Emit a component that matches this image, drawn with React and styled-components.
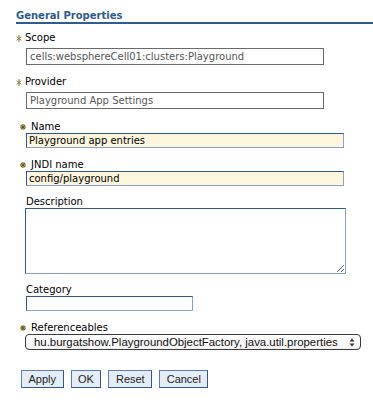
import React from "react";
import styled, { createGlobalStyle } from "styled-components";

const Global = createGlobalStyle`
  html, body { margin: 0; padding: 0; background: #fff; }
  body { font-family: "DejaVu Sans", Verdana, sans-serif; font-size: 10px; color: #000; }
`;

const Page = styled.div`
  padding: 9.5px 0 0 16px;
  width: 373px;
  box-sizing: border-box;
`;

const Title = styled.h2`
  margin: 0;
  font-size: 10px;
  line-height: 12px;
  font-weight: bold;
  color: #2c5a8f;
  padding-bottom: 0px;
  border-bottom: 2px solid #2f5b8f;
`;

const Form = styled.form`
  display: flex;
  flex-direction: column;
`;

const Field = styled.div`
  display: flex;
  flex-direction: column;
  align-items: flex-start;
  margin-top: ${(p) => p.$top ?? 11.5}px;
`;

const Label = styled.label`
  display: flex;
  align-items: center;
  height: 12px;
  line-height: 12px;
  padding-left: ${(p) => p.$indent}px;
  gap: ${(p) => p.$gap ?? 0}px;
  margin-bottom: ${(p) => p.$below ?? 0}px;
`;

const Marker = styled.span`
  display: inline-flex;
  width: ${(p) => p.$w}px;
  justify-content: ${(p) => (p.$w > 6 ? "flex-start" : "center")};
  svg { display: block; }
`;

const ReadOnlyInput = styled.input`
  box-sizing: border-box;
  margin: 0 0 0 10px;
  width: 298px;
  height: 17px;
  border: 1px solid #6a6a6a;
  padding: 0 3px;
  font: inherit;
  font-size: 10px;
  color: #555;
  background: #fff;
  outline: none;
`;

const TextInput = styled.input`
  box-sizing: border-box;
  margin: 0 0 0 10px;
  width: ${(p) => p.$w}px;
  height: 15px;
  border: 1px solid;
  border-color: #2a5a94 #85a3c9 #85a3c9 #2a5a94;
  padding: 0 2px;
  font: inherit;
  font-size: 10px;
  color: #000;
  background: ${(p) => (p.$req ? "#fdf5dc" : "#fff")};
  outline: none;
`;

const TextArea = styled.textarea`
  box-sizing: border-box;
  margin: 0 0 0 9px;
  width: 321px;
  height: 66px;
  border: 1px solid;
  border-color: #2a5a94 #85a3c9 #85a3c9 #2a5a94;
  padding: 2px;
  font: inherit;
  font-size: 10px;
  background: #fff;
  outline: none;
  display: block;
`;

const SelectWrap = styled.div`
  position: relative;
  margin-left: 9px;
  width: 336px;
  height: 16px;
`;

const Select = styled.select`
  appearance: none;
  -webkit-appearance: none;
  box-sizing: border-box;
  width: 100%;
  height: 16px;
  margin: 0;
  padding: 0 0 0 8px;
  border: 1px solid #3a3a3a;
  border-radius: 4px;
  background: linear-gradient(#ffffff, #f2f2f2);
  font-family: "Liberation Sans", Arial, sans-serif;
  font-size: 11.4px;
  line-height: 14px;
  color: #111;
  outline: none;
`;

const Arrows = styled.span`
  position: absolute;
  right: 6px;
  top: 4px;
  pointer-events: none;
  svg { display: block; }
`;

const Buttons = styled.div`
  display: flex;
  gap: 7px;
  margin: 20px 0 0 5px;
`;

const Button = styled.button`
  box-sizing: border-box;
  height: 18px;
  padding: 0 6.5px;
  margin: 0;
  border: 1px solid;
  border-color: #5a80b2 #2c5a8f #2c5a8f #5a80b2;
  background: #e4ecf8;
  font-family: "Liberation Sans", Arial, sans-serif;
  font-size: 11px;
  color: #222;
  line-height: 16px;
`;

const SmallStar = () => (
  <svg width="6" height="7" viewBox="0 0 6 7">
    <g stroke="#8a7a35" strokeWidth="1" strokeLinecap="square">
      <line x1="3" y1="0.5" x2="3" y2="6.5" />
      <line x1="1" y1="2" x2="5" y2="5" />
      <line x1="1" y1="5" x2="5" y2="2" />
    </g>
  </svg>
);

const ReqStar = () => (
  <svg width="6" height="6" viewBox="0 0 6 6">
    <g stroke="#6b5a12" strokeWidth="1.1">
      <line x1="3" y1="0" x2="3" y2="6" />
      <line x1="0" y1="3" x2="6" y2="3" />
      <line x1="0.9" y1="0.9" x2="5.1" y2="5.1" />
      <line x1="0.9" y1="5.1" x2="5.1" y2="0.9" />
    </g>
  </svg>
);

const UpDown = () => (
  <svg width="6" height="9" viewBox="0 0 6 9">
    <path d="M3 0.5 L5.5 3.5 L0.5 3.5 Z" fill="#333" />
    <path d="M3 8.5 L5.5 5.5 L0.5 5.5 Z" fill="#333" />
  </svg>
);

export default function App() {
  return (
    <>
      <Global />
      <Page>
        <Title>General Properties</Title>
        <Form onSubmit={(e) => e.preventDefault()}>
          <Field $top={8.5}>
            <Label $indent={0} $below={3.5}>
              <Marker $w={9}><SmallStar /></Marker>Scope
            </Label>
            <ReadOnlyInput readOnly value="cells:websphereCell01:clusters:Playground" />
          </Field>
          <Field>
            <Label $indent={0} $below={3.5}>
              <Marker $w={9}><SmallStar /></Marker>Provider
            </Label>
            <ReadOnlyInput readOnly value="Playground App Settings" />
          </Field>
          <Field $top={12}>
            <Label $indent={4} $gap={5}>
              <Marker $w={6}><ReqStar /></Marker>Name
            </Label>
            <TextInput $req $w={318} defaultValue="Playground app entries" />
          </Field>
          <Field>
            <Label $indent={4} $gap={5}>
              <Marker $w={6}><ReqStar /></Marker>JNDI name
            </Label>
            <TextInput $req $w={318} defaultValue="config/playground" />
          </Field>
          <Field $top={10}>
            <Label $indent={10}>Description</Label>
            <TextArea />
          </Field>
          <Field $top={10}>
            <Label $indent={10}>Category</Label>
            <TextInput $w={167} defaultValue="" />
          </Field>
          <Field $top={11}>
            <Label $indent={4} $gap={5}>
              <Marker $w={6}><ReqStar /></Marker>Referenceables
            </Label>
            <SelectWrap>
              <Select defaultValue="a">
                <option value="a">hu.burgatshow.PlaygroundObjectFactory, java.util.properties</option>
              </Select>
              <Arrows><UpDown /></Arrows>
            </SelectWrap>
          </Field>
          <Buttons>
            <Button type="button">Apply</Button>
            <Button type="button">OK</Button>
            <Button type="button">Reset</Button>
            <Button type="button">Cancel</Button>
          </Buttons>
        </Form>
      </Page>
    </>
  );
}
